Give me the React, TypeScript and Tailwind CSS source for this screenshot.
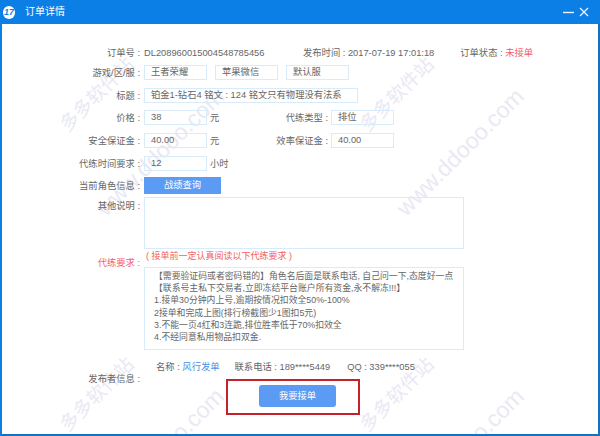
import React from 'react';

const font = { fontFamily: '"Liberation Sans", "Noto Sans CJK SC", sans-serif' };

function Label({ children, red, top }: { children: React.ReactNode; red?: boolean; top?: string }) {
  return (
    <div className={`w-[142px] shrink-0 pr-[4px] text-right whitespace-nowrap ${top ?? ''} ${red ? 'text-[#f4605f]' : 'text-[#666666]'}`}>
      {children} :
    </div>
  );
}

function Field({ value, width = 'w-[63px]' }: { value: string; width?: string }) {
  return (
    <div className={`${width} h-[15px] shrink-0 border border-[#d8ebfb] pl-[6px] leading-[13px] text-[#666666] whitespace-nowrap overflow-hidden`}>
      {value}
    </div>
  );
}

// 斜めの透かし
function Mark() {
  return (
    <div className="w-[300px] h-[300px] relative overflow-visible">
      <div className="absolute left-[42px] top-[85px] w-[110px] text-center -rotate-45 text-[19px] leading-[20px] text-[#e9e9f4] whitespace-nowrap">
        多多软件站
      </div>
      <div className="absolute left-[55px] top-[138px] w-[210px] text-center -rotate-45 text-[23px] leading-[28px] text-[#e9e9f4] whitespace-nowrap">
        www.ddooo.com
      </div>
    </div>
  );
}

export default function App() {
  return (
    <div className="w-[600px] h-[436px] flex flex-col bg-[#0b7fe6] overflow-hidden relative text-[9.3px] leading-[14px]" style={font}>
      {/* タイトルバー */}
      <div className="h-[24px] shrink-0 flex items-center pl-[3px] pr-[11px] text-white">
        <div className="w-[12px] h-[13px] rounded-full bg-white flex items-center justify-center text-[9px] font-bold italic text-[#0b7fe6]">
          17
        </div>
        <div className="ml-[10px] text-[10px]">订单详情</div>
        <div className="ml-auto flex items-center gap-[5px]">
          <svg width="11" height="3" viewBox="0 0 11 3"><path d="M0 1.5H11" stroke="#e8f3fd" strokeWidth="1.4" /></svg>
          <svg width="10" height="10" viewBox="0 0 10 10"><path d="M1 1L9 9M9 1L1 9" stroke="#e8f3fd" strokeWidth="1.3" /></svg>
        </div>
      </div>

      <div className="flex-1 ml-[2px] bg-white relative overflow-hidden border-r-2 border-b-2 border-[#1572c0]">
        {/* 透かし */}
        <div className="absolute left-[-2px] top-[-24px] w-[600px] grid grid-cols-2 pointer-events-none">
          <Mark />
          <Mark />
          <Mark />
          <Mark />
        </div>

        <div className="relative pt-[22px]">
          <div className="flex items-center h-[14px]">
            <Label>订单号</Label>
            <div className="w-[159px] text-[#666666] whitespace-nowrap">DL208960015004548785456</div>
            <div className="text-[#666666] whitespace-nowrap">发布时间 : 2017-07-19 17:01:18</div>
            <div className="ml-[26px] text-[#666666] whitespace-nowrap">订单状态 : <span className="text-[#f4605f]">未接单</span></div>
          </div>

          <div className="flex items-center mt-[5px]">
            <Label>游戏/区/服</Label>
            <div className="flex gap-[8px]">
              <Field value="王者荣耀" />
              <Field value="苹果微信" />
              <Field value="默认服" />
            </div>
          </div>

          <div className="flex items-center mt-[8px]">
            <Label>标题</Label>
            <Field value="铂金1-钻石4 铭文 : 124 铭文只有物理没有法系" width="w-[214px]" />
          </div>

          <div className="flex items-center mt-[7px]">
            <Label>价格</Label>
            <Field value="38" />
            <div className="w-[60px] pl-[3px] text-[#666666]">元</div>
            <div className="w-[64px] text-right pr-[3px] text-[#666666] whitespace-nowrap">代练类型 :</div>
            <Field value="排位" />
          </div>

          <div className="flex items-center mt-[8px]">
            <Label>安全保证金</Label>
            <Field value="40.00" />
            <div className="w-[60px] pl-[3px] text-[#666666]">元</div>
            <div className="w-[64px] text-right pr-[3px] text-[#666666] whitespace-nowrap">效率保证金 :</div>
            <Field value="40.00" />
          </div>

          <div className="flex items-center mt-[8px]">
            <Label>代练时间要求</Label>
            <Field value="12" />
            <div className="pl-[3px] text-[#666666]">小时</div>
          </div>

          <div className="flex items-center mt-[6px]">
            <Label>当前角色信息</Label>
            <div className="w-[77px] h-[17px] bg-[#5b9bf4] text-white text-center leading-[17px]">战绩查询</div>
          </div>

          <div className="flex mt-[3px]">
            <Label top="pt-[2px]">其他说明</Label>
            <div className="w-[320px] h-[52px] border border-[#d8ebfb]" />
          </div>

          <div className="flex">
            <Label red top="pt-[7px]">代练要求</Label>
            <div>
              <div className="pl-[2px] h-[18px] text-[9px] text-[#f4605f] whitespace-pre">( 接单前一定认真阅读以下代练要求 )</div>
              <div className="w-[320px] h-[83px] border border-[#d8ebfb] px-[9px] pt-[2px] text-[8.85px] text-[#666666] leading-[12.2px] whitespace-nowrap">
                <div>【需要验证码或者密码错的】角色名后面是联系电话, 自己问一下,态度好一点</div>
                <div>【联系号主私下交易者,立即冻结平台账户所有资金,永不解冻!!!】</div>
                <div>1.接单30分钟内上号,逾期按情况扣效全50%-100%</div>
                <div>2接单和完成上图(排行榜截图少1图扣5元)</div>
                <div>3.不能一页4红和3连跪,排位胜率低于70%扣效全</div>
                <div>4.不经同意私用物品扣双金.</div>
              </div>
            </div>
          </div>

          <div className="flex mt-[10px]">
            <Label top="pt-[12px]">发布者信息</Label>
            <div>
              <div className="flex text-[#666666] whitespace-nowrap pl-[12px]">
                <div>名称 : <span className="text-[#4a90e8]">风行发单</span></div>
                <div className="pl-[15px]">联系电话 : 189****5449</div>
                <div className="pl-[17px]">QQ : 339****055</div>
              </div>
              <div className="ml-[82px] mt-[5px] w-[134px] h-[36px] border-2 border-[#c4212b] pl-[31px] pt-[4px]">
                <div className="w-[77px] h-[22px] rounded-[3px] bg-[#5b9bf4] text-white text-center leading-[22px]">我要接单</div>
              </div>
            </div>
          </div>
        </div>
      </div>
    </div>
  );
}
